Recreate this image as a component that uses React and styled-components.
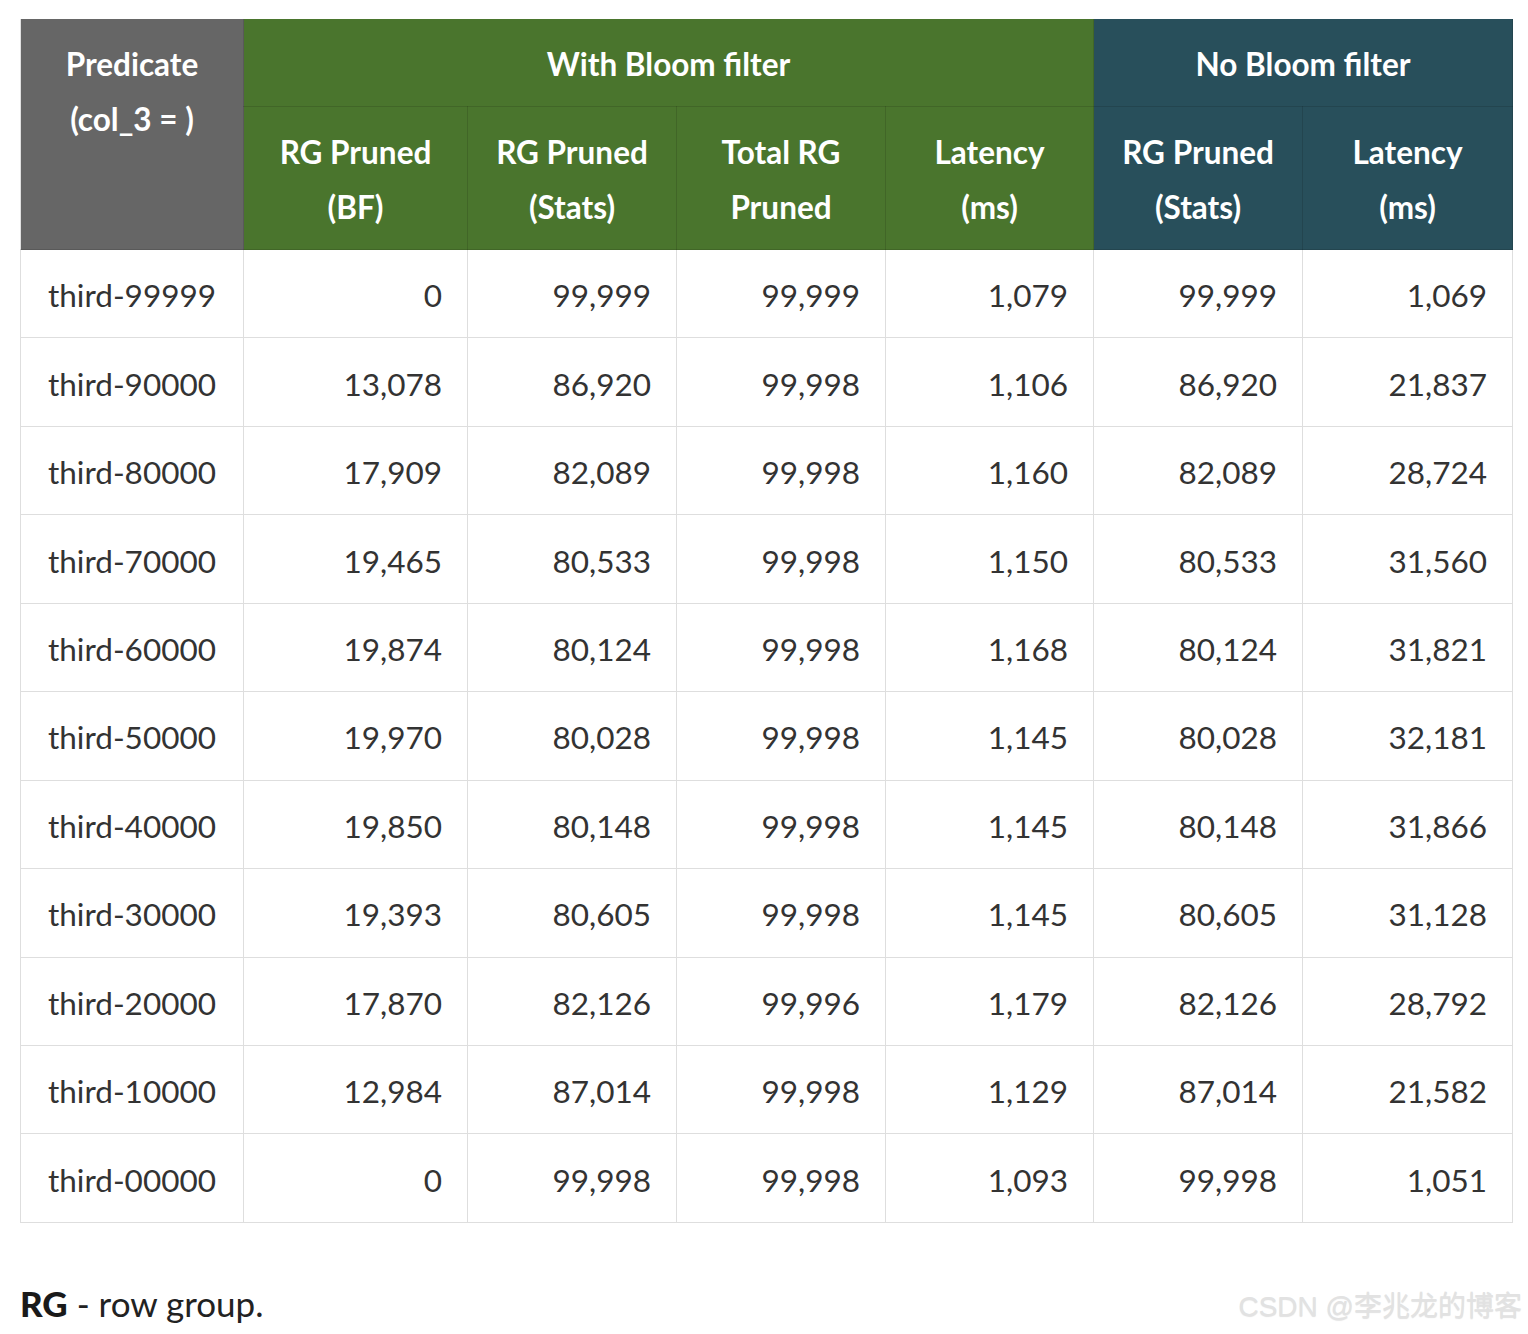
import React from 'react'
import styled, { createGlobalStyle } from 'styled-components'

const GlobalStyle = createGlobalStyle`
  html, body {
    margin: 0;
    padding: 0;
    background: #fff;
  }
  body {
    font-family: Lato, "Open Sans", "Liberation Sans", sans-serif;
  }
`

const Page = styled.div`
  position: relative;
  width: 1528px;
  height: 1334px;
  padding: 19px 16px 0 20px;
  box-sizing: border-box;
  overflow: hidden;
`

const Table = styled.table`
  width: 1492px;
  border-collapse: collapse;
  table-layout: fixed;
  font-size: 31.5px;
  color: #333;
`

const HeadCell = styled.th`
  background-color: ${p => p.$bg};
  color: #fff;
  font-weight: 700;
  line-height: 55px;
  padding: 18px 10px 14px;
  vertical-align: top;
  text-align: center;
  border: 1px solid rgba(0, 0, 0, 0.12);
  border-top: none;
  white-space: nowrap;
`

const Cell = styled.td`
  height: 88.45px;
  box-sizing: border-box;
  padding: 4px 25px 0;
  line-height: 55px;
  text-align: ${p => (p.$first ? 'center' : 'right')};
  border: 1px solid #dedede;
  white-space: nowrap;
`

const Note = styled.p`
  margin: 59px 0 0;
  font-size: 35px;
  color: #222;

  b {
    font-weight: 900;
    color: #1a1a1a;
  }
`

const Watermark = styled.div`
  position: absolute;
  right: 6px;
  bottom: 10px;
  font-family: "Liberation Sans", "Noto Sans CJK SC", sans-serif;
  font-size: 28px;
  color: #e2e2e2;
  text-shadow: 0 1px 1px rgba(0, 0, 0, 0.12);
`

const GRAY = '#666666'
const GREEN = '#4a752d'
const TEAL = '#284f5b'

const rows = [
  ['third-99999', '0', '99,999', '99,999', '1,079', '99,999', '1,069'],
  ['third-90000', '13,078', '86,920', '99,998', '1,106', '86,920', '21,837'],
  ['third-80000', '17,909', '82,089', '99,998', '1,160', '82,089', '28,724'],
  ['third-70000', '19,465', '80,533', '99,998', '1,150', '80,533', '31,560'],
  ['third-60000', '19,874', '80,124', '99,998', '1,168', '80,124', '31,821'],
  ['third-50000', '19,970', '80,028', '99,998', '1,145', '80,028', '32,181'],
  ['third-40000', '19,850', '80,148', '99,998', '1,145', '80,148', '31,866'],
  ['third-30000', '19,393', '80,605', '99,998', '1,145', '80,605', '31,128'],
  ['third-20000', '17,870', '82,126', '99,996', '1,179', '82,126', '28,792'],
  ['third-10000', '12,984', '87,014', '99,998', '1,129', '87,014', '21,582'],
  ['third-00000', '0', '99,998', '99,998', '1,093', '99,998', '1,051'],
]

const widths = [223, 224, 209, 209, 208, 209, 210]

export default function App() {
  return (
    <Page>
      <GlobalStyle />
      <Table>
        <colgroup>
          {widths.map((w, i) => <col key={i} style={{ width: w }} />)}
        </colgroup>
        <thead>
          <tr>
            <HeadCell $bg={GRAY} rowSpan={2}>Predicate<br />(col_3 = )</HeadCell>
            <HeadCell $bg={GREEN} colSpan={4}>With Bloom filter</HeadCell>
            <HeadCell $bg={TEAL} colSpan={2}>No Bloom filter</HeadCell>
          </tr>
          <tr>
            <HeadCell $bg={GREEN}>RG Pruned<br />(BF)</HeadCell>
            <HeadCell $bg={GREEN}>RG Pruned<br />(Stats)</HeadCell>
            <HeadCell $bg={GREEN}>Total RG<br />Pruned</HeadCell>
            <HeadCell $bg={GREEN}>Latency<br />(ms)</HeadCell>
            <HeadCell $bg={TEAL}>RG Pruned<br />(Stats)</HeadCell>
            <HeadCell $bg={TEAL}>Latency<br />(ms)</HeadCell>
          </tr>
        </thead>
        <tbody>
          {rows.map(r => (
            <tr key={r[0]}>
              {r.map((v, i) => <Cell key={i} $first={i === 0}>{v}</Cell>)}
            </tr>
          ))}
        </tbody>
      </Table>
      <Note><b>RG</b> - row group.</Note>
      <Watermark>CSDN @李兆龙的博客</Watermark>
    </Page>
  )
}
